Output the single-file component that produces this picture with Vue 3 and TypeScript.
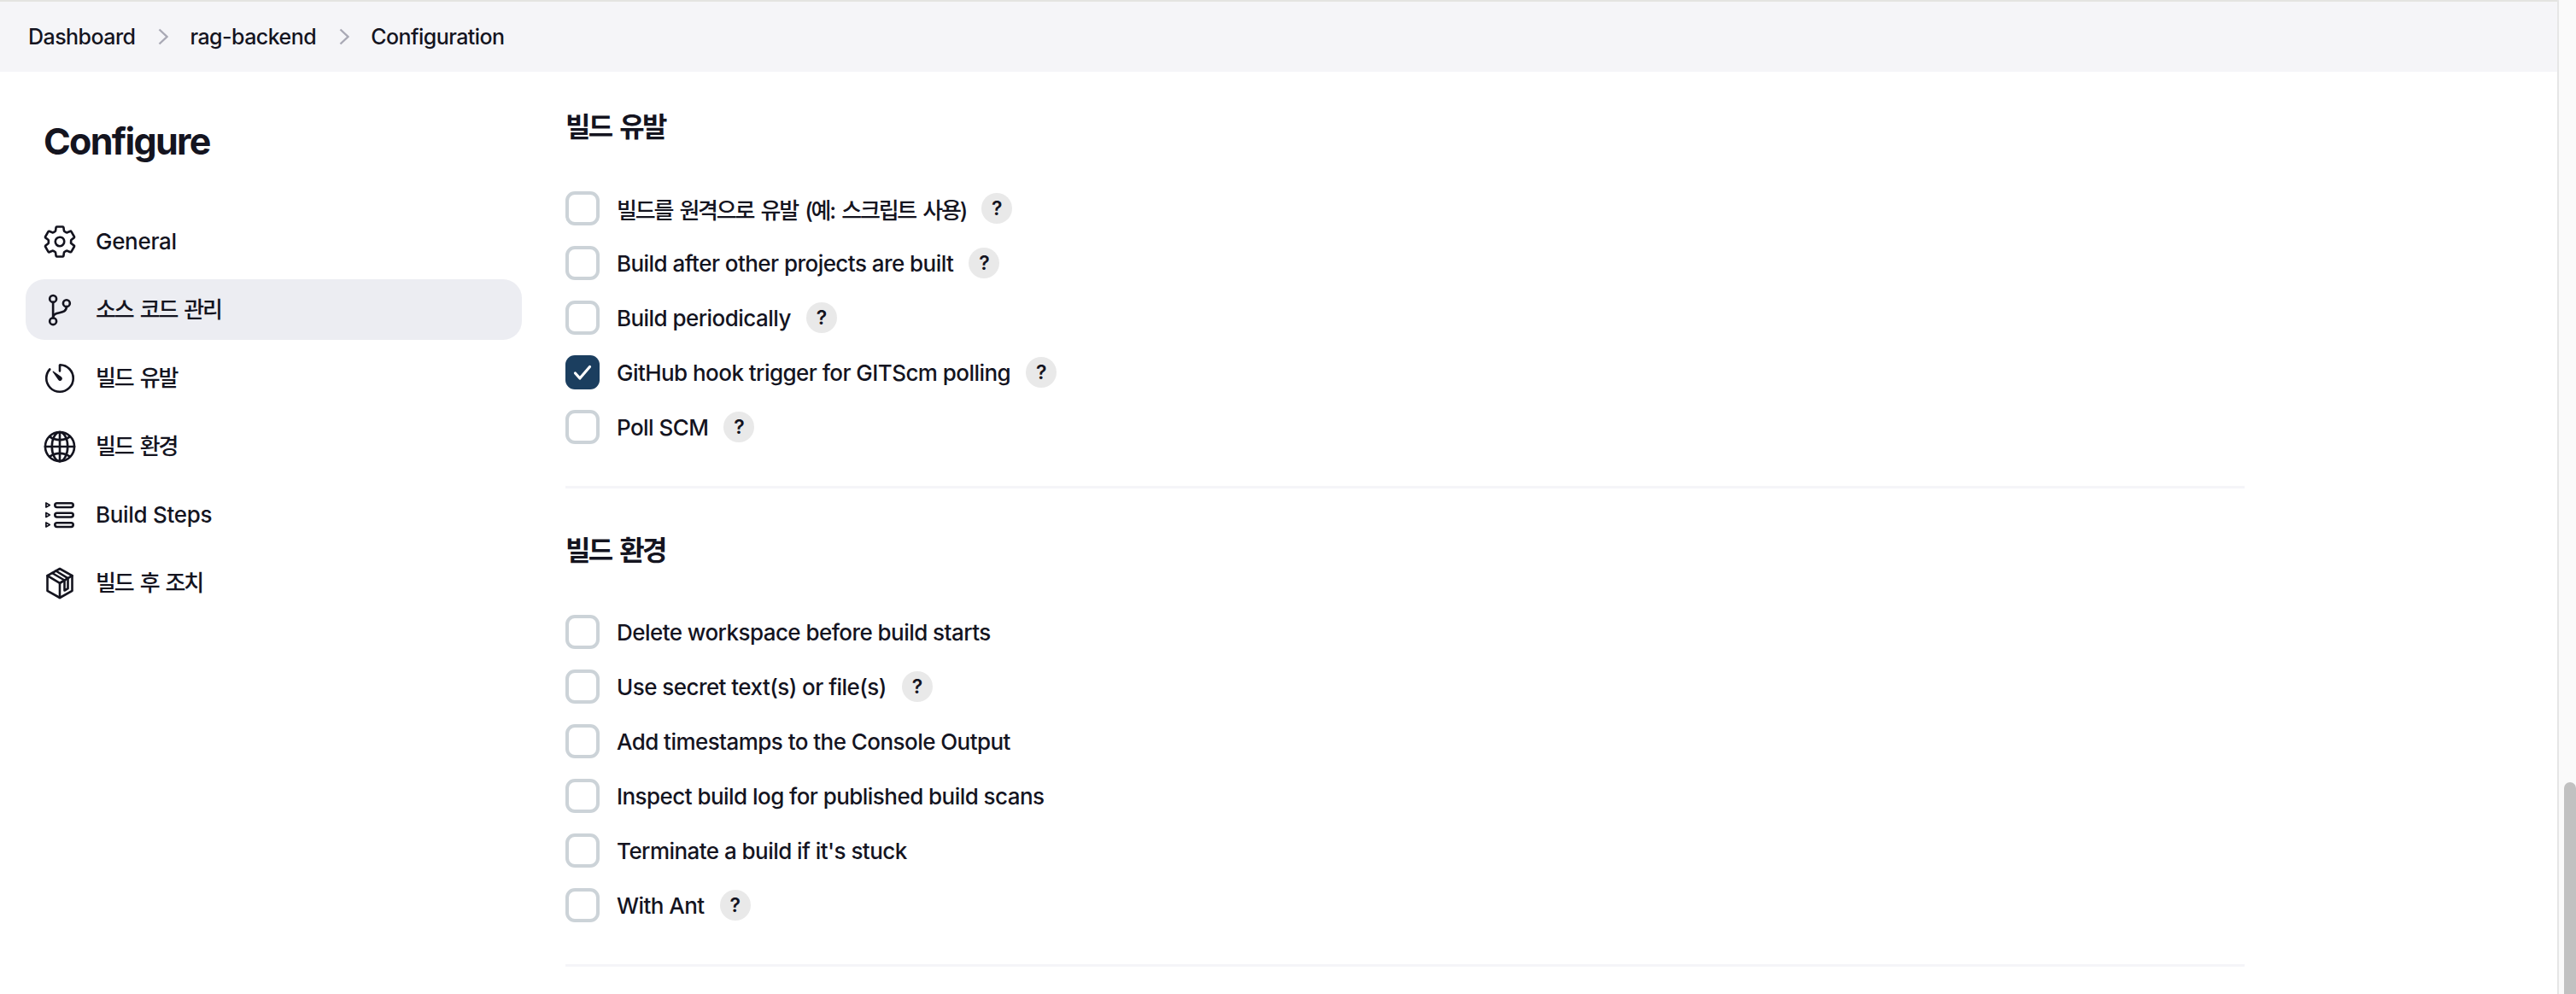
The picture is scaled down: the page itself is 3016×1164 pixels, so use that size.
<script setup lang="ts">
interface Trigger {
  label: string
  help?: boolean
  checked?: boolean
}

const crumbs = ['Dashboard', 'rag-backend', 'Configuration']

const navItems = [
  { key: 'general', label: 'General' },
  { key: 'scm', label: '소스 코드 관리', active: true },
  { key: 'triggers', label: '빌드 유발' },
  { key: 'env', label: '빌드 환경' },
  { key: 'steps', label: 'Build Steps' },
  { key: 'post', label: '빌드 후 조치' },
]

const sections: { title: string; items: Trigger[] }[] = [
  {
    title: '빌드 유발',
    items: [
      { label: '빌드를 원격으로 유발 (예: 스크립트 사용)', help: true },
      { label: 'Build after other projects are built', help: true },
      { label: 'Build periodically', help: true },
      { label: 'GitHub hook trigger for GITScm polling', help: true, checked: true },
      { label: 'Poll SCM', help: true },
    ],
  },
  {
    title: '빌드 환경',
    items: [
      { label: 'Delete workspace before build starts' },
      { label: 'Use secret text(s) or file(s)', help: true },
      { label: 'Add timestamps to the Console Output' },
      { label: 'Inspect build log for published build scans' },
      { label: "Terminate a build if it's stuck" },
      { label: 'With Ant', help: true },
    ],
  },
]

// hangul runs wider in this font than in the original, so those labels get tighter tracking
const isKo = (text: string) => /[가-힣]/.test(text)
</script>

<template>
  <div class="window">
    <div class="page">
      <nav class="breadcrumbs">
        <template v-for="(crumb, i) in crumbs" :key="crumb">
          <svg v-if="i > 0" class="chevron" viewBox="0 0 12 20">
            <path d="M1.5 1.5 10.5 10l-9 8.5" />
          </svg>
          <span>{{ crumb }}</span>
        </template>
      </nav>

      <div class="layout">
        <aside class="sidebar">
          <h1 class="title">Configure</h1>
          <ul class="nav">
            <li v-for="item in navItems" :key="item.key" class="nav-item" :class="{ active: item.active }">
              <svg v-if="item.key === 'general'" class="icon" viewBox="0 0 512 512">
                <path d="M262.29 192.31a64 64 0 1057.4 57.4 64.13 64.13 0 00-57.4-57.4zM416.39 256a154.34 154.34 0 01-1.53 20.79l45.21 35.46a10.81 10.81 0 012.45 13.75l-42.77 74a10.81 10.81 0 01-13.14 4.59l-44.9-18.08a16.11 16.11 0 00-15.17 1.75A164.48 164.48 0 01325 400.8a15.94 15.94 0 00-8.82 12.14l-6.73 47.89a11.08 11.08 0 01-10.68 9.17h-85.54a11.11 11.11 0 01-10.69-8.87l-6.72-47.82a16.07 16.07 0 00-9-12.22 155.3 155.3 0 01-21.46-12.57 16 16 0 00-15.11-1.71l-44.89 18.07a10.81 10.81 0 01-13.14-4.58l-42.77-74a10.8 10.8 0 012.45-13.75l38.21-30a16.05 16.05 0 006-14.08c-.36-4.17-.58-8.33-.58-12.5s.21-8.27.58-12.35a16 16 0 00-6.07-13.94l-38.19-30A10.81 10.81 0 0149.48 186l42.77-74a10.81 10.81 0 0113.14-4.59l44.9 18.08a16.11 16.11 0 0015.17-1.75A164.48 164.48 0 01187 111.2a15.94 15.94 0 008.82-12.14l6.73-47.89A11.08 11.08 0 01213.23 42h85.54a11.11 11.11 0 0110.69 8.87l6.72 47.82a16.07 16.07 0 009 12.22 155.3 155.3 0 0121.46 12.57 16 16 0 0015.11 1.71l44.89-18.07a10.81 10.81 0 0113.14 4.58l42.77 74a10.8 10.8 0 01-2.45 13.75l-38.21 30a16.05 16.05 0 00-6.05 14.08c.33 4.14.55 8.3.55 12.47z" />
              </svg>
              <svg v-else-if="item.key === 'scm'" class="icon" viewBox="0 0 512 512">
                <circle cx="160" cy="96" r="48" />
                <circle cx="160" cy="416" r="48" />
                <path d="M160 368V144" />
                <circle cx="352" cy="160" r="48" />
                <path d="M352 208c0 128-192 48-192 160" />
              </svg>
              <svg v-else-if="item.key === 'triggers'" class="icon" viewBox="0 0 512 512">
                <path d="M112.91 128A191.85 191.85 0 0064 254c-1.18 106.35 85.65 193.8 192 194 106.2.2 192-85.83 192-192 0-104.54-83.55-189.61-187.5-192a4.36 4.36 0 00-4.5 4.37V152" />
                <path class="solid" d="M233.38 278.63l-79-113a8.13 8.13 0 0111.32-11.32l113 79a32.5 32.5 0 01-37 53.33 33.21 33.21 0 01-9.32-8.01z" />
              </svg>
              <svg v-else-if="item.key === 'env'" class="icon" viewBox="0 0 512 512">
                <path d="M256 48C141.13 48 48 141.13 48 256s93.13 208 208 208 208-93.13 208-208S370.87 48 256 48z" />
                <path d="M256 48c-58.07 0-112.67 93.13-112.67 208S197.93 464 256 464s112.67-93.13 112.67-208S314.07 48 256 48z" />
                <path d="M117.33 117.33c38.24 27.15 86.38 43.34 138.67 43.34s100.43-16.19 138.67-43.34M394.67 394.67c-38.24-27.15-86.38-43.34-138.67-43.34s-100.43 16.19-138.67 43.34" />
                <path d="M256 48v416M464 256H48" />
              </svg>
              <svg v-else-if="item.key === 'steps'" class="icon" viewBox="0 0 42 42">
                <g class="thin">
                  <path d="M4.9 7v5l4.4-2.5zM4.9 18.5v5l4.4-2.5zM4.9 30v5l4.4-2.5z" stroke-width="1.7" />
                  <rect x="15.3" y="7.2" width="21.4" height="4.8" rx="2.4" />
                  <rect x="15.3" y="18.7" width="21.4" height="4.8" rx="2.4" />
                  <rect x="15.3" y="30.2" width="21.4" height="4.8" rx="2.4" />
                </g>
              </svg>
              <svg v-else class="icon" viewBox="0 0 42 42">
                <g class="thin">
                  <path d="M21 4 35.5 12.2v17.6L21 38 6.5 29.8V12.2z" />
                  <path d="M6.5 12.2 21 20.8l14.5-8.6M21 20.8V38" />
                  <path d="M12 9 26.5 17.5v12l4-2.3V15.2L16.4 6.5" />
                  <path d="M21 20.8 26.5 17.5" />
                </g>
              </svg>
              <span :class="{ ko: isKo(item.label) }">{{ item.label }}</span>
            </li>
          </ul>
        </aside>

        <main class="main">
          <section v-for="section in sections" :key="section.title" class="section">
            <h2 class="section-title">{{ section.title }}</h2>
            <div class="options">
              <div v-for="opt in section.items" :key="opt.label" class="option">
                <span class="checkbox" :class="{ checked: opt.checked }">
                  <svg v-if="opt.checked" viewBox="0 0 40 40">
                    <path d="M11.5 21l5.4 6 11.6-13.5" />
                  </svg>
                </span>
                <span class="label" :class="{ ko: isKo(opt.label) }">{{ opt.label }}</span>
                <span v-if="opt.help" class="help">?</span>
              </div>
            </div>
          </section>
        </main>
      </div>
    </div>

    <div class="scrollbar">
      <div class="thumb"></div>
    </div>
  </div>
</template>

<style scoped>
.window {
  display: flex;
  height: 1164px;
  overflow: hidden;
  background: #fff;
  color: #14141f;
  font-family: Inter, "Noto Sans CJK KR", sans-serif;
  font-weight: 500;
  font-size: 26px;
  letter-spacing: -0.3px;
}

.page {
  flex: 1;
  min-width: 0;
}

.breadcrumbs {
  display: flex;
  align-items: center;
  height: 82px;
  padding-left: 33px;
  border-top: 2px solid #e4e4e1;
  background: #f5f5f8;
  font-size: 25px;
  letter-spacing: -0.55px;
}

.chevron {
  width: 12px;
  height: 20px;
  margin: 0 25px 0 27px;
  fill: none;
  stroke: #a9a9b5;
  stroke-width: 2.4;
}

.layout {
  display: flex;
}

.sidebar {
  width: 581px;
  margin-left: 30px;
  flex-shrink: 0;
}

.title {
  margin: 0;
  padding: 54px 0 0 21px;
  font-size: 43px;
  line-height: 54px;
  font-weight: 700;
  letter-spacing: -1.7px;
}

.nav {
  list-style: none;
  margin: 55px 0 0;
  padding: 0;
  display: flex;
  flex-direction: column;
  gap: 9px;
}

.nav-item {
  display: flex;
  align-items: center;
  gap: 21px;
  height: 71px;
  padding-left: 19px;
  border-radius: 22px;
}

.nav-item.active {
  background: #ecedf2;
}

.nav-item .ko {
  padding-bottom: 5px;
}

.ko {
  letter-spacing: -2.2px;
  word-spacing: 3.5px;
}

.icon {
  width: 42px;
  height: 42px;
  flex-shrink: 0;
  fill: none;
  stroke: #14141f;
  stroke-width: 32;
  stroke-linecap: round;
  stroke-linejoin: round;
}

.icon .solid {
  fill: #14141f;
  stroke: none;
}

.icon .thin {
  stroke-width: 2.6;
}

.main {
  width: 1966px;
  margin-left: 51px;
}

.section {
  padding: 41px 0 49px;
  border-bottom: 3px solid #f5f5f8;
}

.section + .section {
  padding-top: 49px;
}

.section-title {
  margin: 0 0 51px;
  font-size: 32px;
  line-height: 48px;
  font-weight: 600;
  letter-spacing: -2.6px;
  word-spacing: 4px;
}

.options {
  display: flex;
  flex-direction: column;
  gap: 24px;
}

.option {
  display: flex;
  align-items: center;
  height: 40px;
}

.label {
  letter-spacing: -0.55px;
}

.label.ko {
  letter-spacing: -2.2px;
  word-spacing: 3.5px;
}

.checkbox {
  display: flex;
  width: 40px;
  height: 40px;
  box-sizing: border-box;
  flex-shrink: 0;
  margin-right: 20px;
  border: 4px solid #ccd3d8;
  border-radius: 11px;
}

.checkbox.checked {
  border: 0;
  background: #1b3e5f;
}

.checkbox svg {
  width: 40px;
  height: 40px;
  fill: none;
  stroke: #fff;
  stroke-width: 3.2;
  stroke-linecap: round;
  stroke-linejoin: round;
}

.help {
  display: flex;
  align-items: center;
  justify-content: center;
  width: 36px;
  height: 36px;
  margin-left: 18px;
  border-radius: 50%;
  background: #e9e9e9;
  font-size: 23px;
  font-weight: 600;
}

.scrollbar {
  display: flex;
  flex-direction: column;
  justify-content: flex-end;
  width: 20px;
  box-sizing: content-box;
  border-left: 2px solid #e6e6e6;
  background: #fafafa;
}

.thumb {
  height: 248px;
  margin-left: 6px;
  border-radius: 8px 8px 0 0;
  background: #c1c1c1;
}
</style>
